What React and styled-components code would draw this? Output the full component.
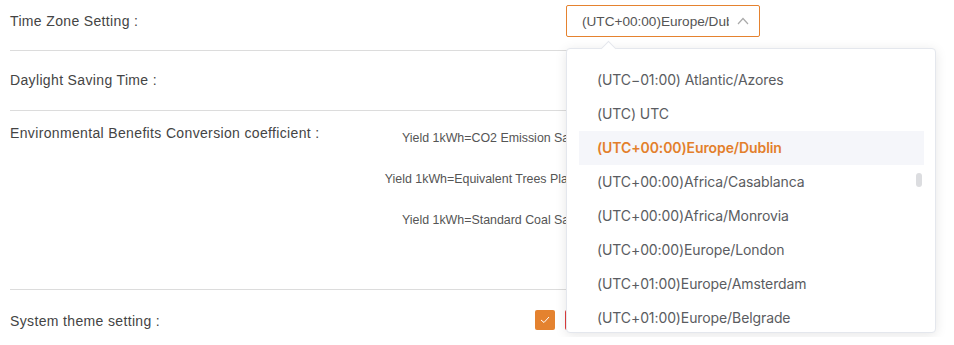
import React from 'react';
import styled, { createGlobalStyle } from 'styled-components';

const GlobalStyle = createGlobalStyle`
  html, body {
    margin: 0;
    padding: 0;
    background: #fff;
    overflow: hidden;
  }
  body {
    font-family: "Liberation Sans", Arial, sans-serif;
  }
`;

const Page = styled.div`
  position: relative;
  width: 920px;
  padding-left: 10px;
`;

const Row = styled.div`
  display: flex;
  align-items: flex-start;
  min-height: ${({ $minHeight }) => $minHeight || 0}px;
  padding: ${({ $pad }) => $pad};
  border-bottom: ${({ $last }) => ($last ? 'none' : '1px solid #dcdcdc')};
  box-sizing: border-box;
`;

const Label = styled.div`
  flex: 0 0 ${({ $width }) => $width}px;
  font-size: 14px;
  letter-spacing: 0.35px;
  line-height: ${({ $lh }) => $lh || 32}px;
  color: #444;
  white-space: nowrap;
`;

const SelectBox = styled.div`
  display: flex;
  align-items: center;
  width: 194px;
  height: 32px;
  box-sizing: border-box;
  border: 1px solid #e5822f;
  border-radius: 2px;
  padding: 0 10px 0 15px;
  font-size: 13.6px;
  color: #555;
`;

const SelectText = styled.span`
  flex: 1;
  overflow: hidden;
  white-space: nowrap;
`;

const Chevron = styled.svg`
  flex: 0 0 auto;
  margin-left: 8px;
`;

const CoeffForm = styled.div`
  display: grid;
  grid-template-columns: 222px 200px;
  row-gap: 9px;
  column-gap: 12px;
`;

const CoeffLabel = styled.div`
  text-align: right;
  font-size: 12.4px;
  line-height: 32px;
  color: #555;
  white-space: nowrap;
`;

const CoeffInput = styled.div`
  height: 32px;
  box-sizing: border-box;
  border: 1px solid #dcdfe6;
  border-radius: 2px;
`;

const Swatches = styled.div`
  display: flex;
  gap: 10px;
  padding-top: 5px;
`;

const Swatch = styled.div`
  width: 20px;
  height: 20px;
  border-radius: 2px;
  background: ${({ $color }) => $color};
  display: flex;
  align-items: center;
  justify-content: center;
`;

const Dropdown = styled.div`
  position: absolute;
  left: 566px;
  top: 48px;
  width: 370px;
  height: 285px;
  box-sizing: border-box;
  background: #fff;
  border: 1px solid #e4e7ed;
  border-radius: 4px;
  box-shadow: 0 2px 12px rgba(0, 0, 0, 0.1);
  padding: 14px 11px 0 12px;
`;

const Arrow = styled.div`
  position: absolute;
  top: -6px;
  left: 36px;
  width: 10px;
  height: 10px;
  background: #fff;
  border-top: 1px solid #e4e7ed;
  border-left: 1px solid #e4e7ed;
  transform: rotate(45deg);
`;

const List = styled.div`
  height: 270px;
  overflow: hidden;
`;

const Item = styled.div`
  height: 34px;
  line-height: 34px;
  padding-left: 18px;
  font-family: Inter, "Liberation Sans", sans-serif;
  font-size: 14px;
  letter-spacing: -0.1px;
  white-space: nowrap;
  color: ${({ $active }) => ($active ? '#e37f2b' : '#5a5c61')};
  font-weight: ${({ $active }) => ($active ? 600 : 400)};
  background: ${({ $active }) => ($active ? '#f5f6fa' : 'transparent')};
`;

const Thumb = styled.div`
  position: absolute;
  right: 13px;
  top: 124px;
  width: 6px;
  height: 14px;
  border-radius: 3px;
  background: #dcdde0;
`;

const zones = [
  '(UTC\u221201:00) Atlantic/Azores',
  '(UTC) UTC',
  '(UTC+00:00)Europe/Dublin',
  '(UTC+00:00)Africa/Casablanca',
  '(UTC+00:00)Africa/Monrovia',
  '(UTC+00:00)Europe/London',
  '(UTC+01:00)Europe/Amsterdam',
  '(UTC+01:00)Europe/Belgrade',
];

const coefficients = [
  'Yield 1kWh=CO2 Emission Saving',
  'Yield 1kWh=Equivalent Trees Planted',
  'Yield 1kWh=Standard Coal Saving',
];

const App = () => (
  <>
    <GlobalStyle />
    <Page>
      <Row $pad="5px 0 13px">
        <Label $width={556}>Time Zone Setting :</Label>
        <SelectBox>
          <SelectText>(UTC+00:00)Europe/Dublin</SelectText>
          <Chevron width="12" height="8" viewBox="0 0 12 8">
            <path d="M1 7 L6 1.5 L11 7" fill="none" stroke="#aaa" strokeWidth="1.2" />
          </Chevron>
        </SelectBox>
      </Row>

      <Row $pad="13px 0 14px">
        <Label $width={556}>Daylight Saving Time :</Label>
      </Row>

      <Row $pad="11px 0 0" $minHeight={179}>
        <Label $width={360} $lh={22}>Environmental Benefits Conversion coefficient :</Label>
        <CoeffForm>
          {coefficients.map((c) => (
            <React.Fragment key={c}>
              <CoeffLabel>{c}</CoeffLabel>
              <CoeffInput />
            </React.Fragment>
          ))}
        </CoeffForm>
      </Row>

      <Row $pad="15px 0 0" $last>
        <Label $width={525}>System theme setting :</Label>
        <Swatches>
          <Swatch $color="#e4822f">
            <svg width="10" height="8" viewBox="0 0 10 8">
              <path d="M1 4 L4 6.5 L9 1" fill="none" stroke="#fff" strokeWidth="1" />
            </svg>
          </Swatch>
          <Swatch $color="#e03c3c" />
        </Swatches>
      </Row>

      <Dropdown>
        <Arrow />
        <List>
          {zones.map((z) => (
            <Item key={z} $active={z === '(UTC+00:00)Europe/Dublin'}>
              {z}
            </Item>
          ))}
        </List>
        <Thumb />
      </Dropdown>
    </Page>
  </>
);

export default App;
